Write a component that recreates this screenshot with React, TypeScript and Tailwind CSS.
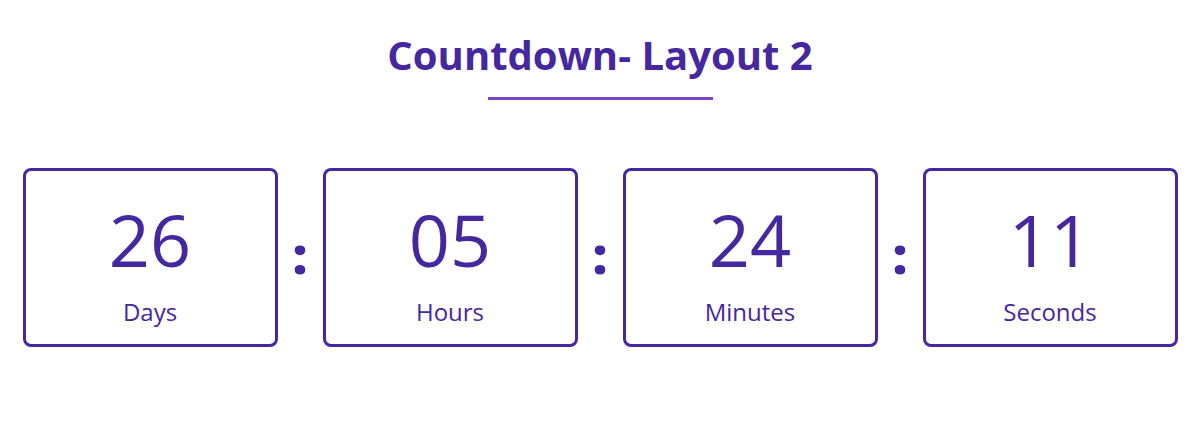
import React from 'react';

interface Unit {
  value: string;
  label: string;
}

const units: Unit[] = [
  { value: '26', label: 'Days' },
  { value: '05', label: 'Hours' },
  { value: '24', label: 'Minutes' },
  { value: '11', label: 'Seconds' },
];

function TimeBox({ unit }: { unit: Unit }) {
  return (
    <div className="box-border flex h-[179px] w-[255px] flex-col items-center rounded-[8px] border-[3px] border-[#4527a0] pt-[32px]">
      <span className="text-[72px] leading-none text-[#4527a0]">{unit.value}</span>
      <span className="mt-[25px] text-[24px] leading-none text-[#4527a0]">{unit.label}</span>
    </div>
  );
}

export default function App() {
  return (
    <div className="min-h-[425px] bg-white font-['Open_Sans',sans-serif]">
      <div className="flex flex-col items-center pt-[35px]">
        <h1 className="text-[40px] font-bold leading-none text-[#4527a0]">Countdown- Layout 2</h1>
        <div className="mt-[22px] h-[3px] w-[225px] bg-[#7f43c5]" />
      </div>

      {/* countdown row */}
      <div className="mt-[68px] flex items-center justify-center">
        {units.map((unit, i) => (
          <React.Fragment key={unit.label}>
            {i > 0 && (
              <div className="flex w-[45px] justify-center pb-[8px]">
                <span className="text-[52px] font-extrabold leading-none text-[#4527a0]">:</span>
              </div>
            )}
            <TimeBox unit={unit} />
          </React.Fragment>
        ))}
      </div>
    </div>
  );
}
